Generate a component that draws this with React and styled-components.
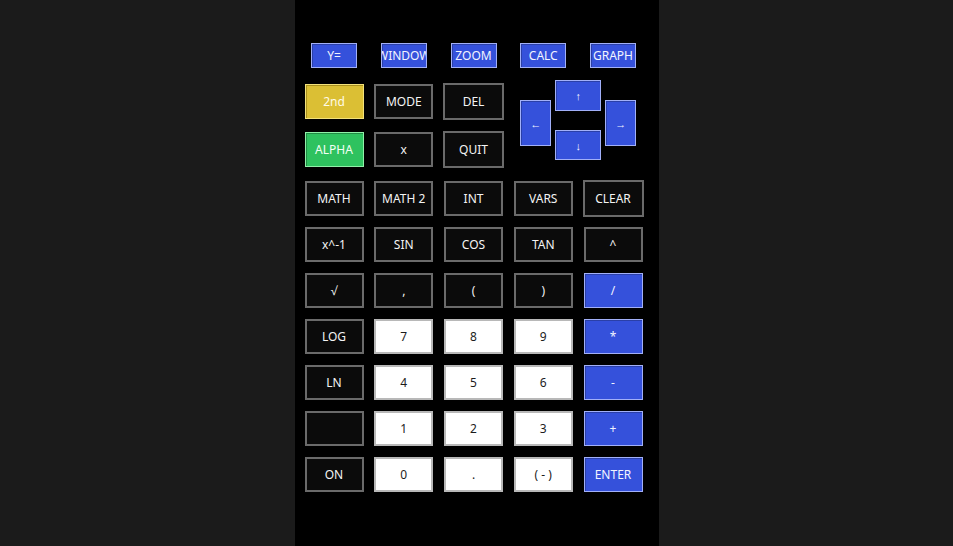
import React from "react";
import styled, { createGlobalStyle, css } from "styled-components";

const GlobalStyle = createGlobalStyle`
    html, body {
        margin: 0;
        padding: 0;
        background: #1b1b1b;
        height: 100%;
    }
    #root {
        height: 100%;
    }
`;

const Page = styled.div`
    height: 546px;
    display: flex;
    justify-content: center;
    overflow: hidden;
`;

const Body = styled.div`
    width: 364px;
    background: #000;
    box-sizing: border-box;
    padding: 43px 0 0 10px;
    display: flex;
    flex-direction: column;
`;

const tones = {
    dark: css`
        background: #0b0b0b;
        color: #f4f4f4;
        border: 2px solid #6a6a6a;
    `,
    light: css`
        background: #ffffff;
        color: #1c1c1c;
        border: 2px solid #b8b8b8;
    `,
    blue: css`
        background: #3551db;
        color: #f2f4ff;
        border: 1px solid #a2b0f8;
        box-shadow: inset 1px 1px 0 #2a3fa8;
    `,
    yellow: css`
        background: #dbbf34;
        color: #fffbe6;
        border: 1px solid #f3e27a;
        box-shadow: inset 1px 1px 0 #a88f1e;
    `,
    green: css`
        background: #2ec25f;
        color: #f2fff5;
        border: 1px solid #8ff0a8;
        box-shadow: inset 1px 1px 0 #1f8c43;
    `,
};

const Key = styled.button`
    box-sizing: border-box;
    width: ${p => (p.$big ? "calc(100% + 2px)" : "100%")};
    height: ${p => (p.$big ? "37px" : "35px")};
    margin: ${p => (p.$big ? "-1px" : "0")};
    padding: 0;
    display: flex;
    align-items: center;
    justify-content: center;
    overflow: hidden;
    white-space: nowrap;
    font-family: "Noto Sans", "Open Sans", sans-serif;
    font-size: 12px;
    cursor: pointer;
    ${p => tones[p.$tone || "dark"]}
`;

const FnRow = styled.div`
    display: grid;
    grid-template-columns: repeat(5, 59px);
    column-gap: 10.75px;
    height: 25px;
`;

const FnKey = styled(Key)`
    width: 46px;
    height: 25px;
    justify-self: center;
`;

const Upper = styled.div`
    margin-top: 16px;
    display: grid;
    grid-template-columns: repeat(5, 59px);
    grid-template-rows: 35px 35px;
    column-gap: 10.75px;
    row-gap: 13px;
`;

const Pad = styled.div`
    grid-column: 4 / span 2;
    grid-row: 1 / span 2;
    justify-self: center;
    align-self: start;
    margin-top: -4px;
    display: grid;
    grid-template-columns: 31px 46px 31px;
    grid-template-rows: 20px 11px 19px 16px 14px;
    column-gap: 4px;
`;

const ArrowKey = styled(Key)`
    width: 100%;
    height: 100%;
    font-size: 11px;
    grid-column: ${p => p.$col};
    grid-row: ${p => p.$row};
`;

const Lower = styled.div`
    margin-top: 14px;
    display: grid;
    grid-template-columns: repeat(5, 59px);
    grid-auto-rows: 35px;
    column-gap: 10.75px;
    row-gap: 11px;
`;

const fnKeys = ["Y=", "WINDOW", "ZOOM", "CALC", "GRAPH"];

const rows = [
    [["MATH"], ["MATH 2"], ["INT"], ["VARS"], ["CLEAR", "dark", true]],
    [["x^-1"], ["SIN"], ["COS"], ["TAN"], ["^"]],
    [["√"], [","], ["("], [")"], ["/", "blue"]],
    [["LOG"], ["7", "light"], ["8", "light"], ["9", "light"], ["*", "blue"]],
    [["LN"], ["4", "light"], ["5", "light"], ["6", "light"], ["-", "blue"]],
    [[""], ["1", "light"], ["2", "light"], ["3", "light"], ["+", "blue"]],
    [["ON"], ["0", "light"], [".", "light"], ["( - )", "light"], ["ENTER", "blue"]],
];

function App() {
    return (
        <>
            <GlobalStyle />
            <Page>
                <Body>
                    <FnRow>
                        {fnKeys.map(k => (
                            <FnKey key={k} $tone="blue">{k}</FnKey>
                        ))}
                    </FnRow>
                    <Upper>
                        <Key $tone="yellow">2nd</Key>
                        <Key>MODE</Key>
                        <Key $big>DEL</Key>
                        <Pad>
                            <ArrowKey $tone="blue" $col="2" $row="1 / span 2">↑</ArrowKey>
                            <ArrowKey $tone="blue" $col="1" $row="2 / span 3">←</ArrowKey>
                            <ArrowKey $tone="blue" $col="3" $row="2 / span 3">→</ArrowKey>
                            <ArrowKey $tone="blue" $col="2" $row="4 / span 2">↓</ArrowKey>
                        </Pad>
                        <Key $tone="green">ALPHA</Key>
                        <Key>x</Key>
                        <Key $big>QUIT</Key>
                    </Upper>
                    <Lower>
                        {rows.flat().map(([label, tone, big], i) => (
                            <Key key={i} $tone={tone} $big={big}>{label}</Key>
                        ))}
                    </Lower>
                </Body>
            </Page>
        </>
    );
}

export default App;
